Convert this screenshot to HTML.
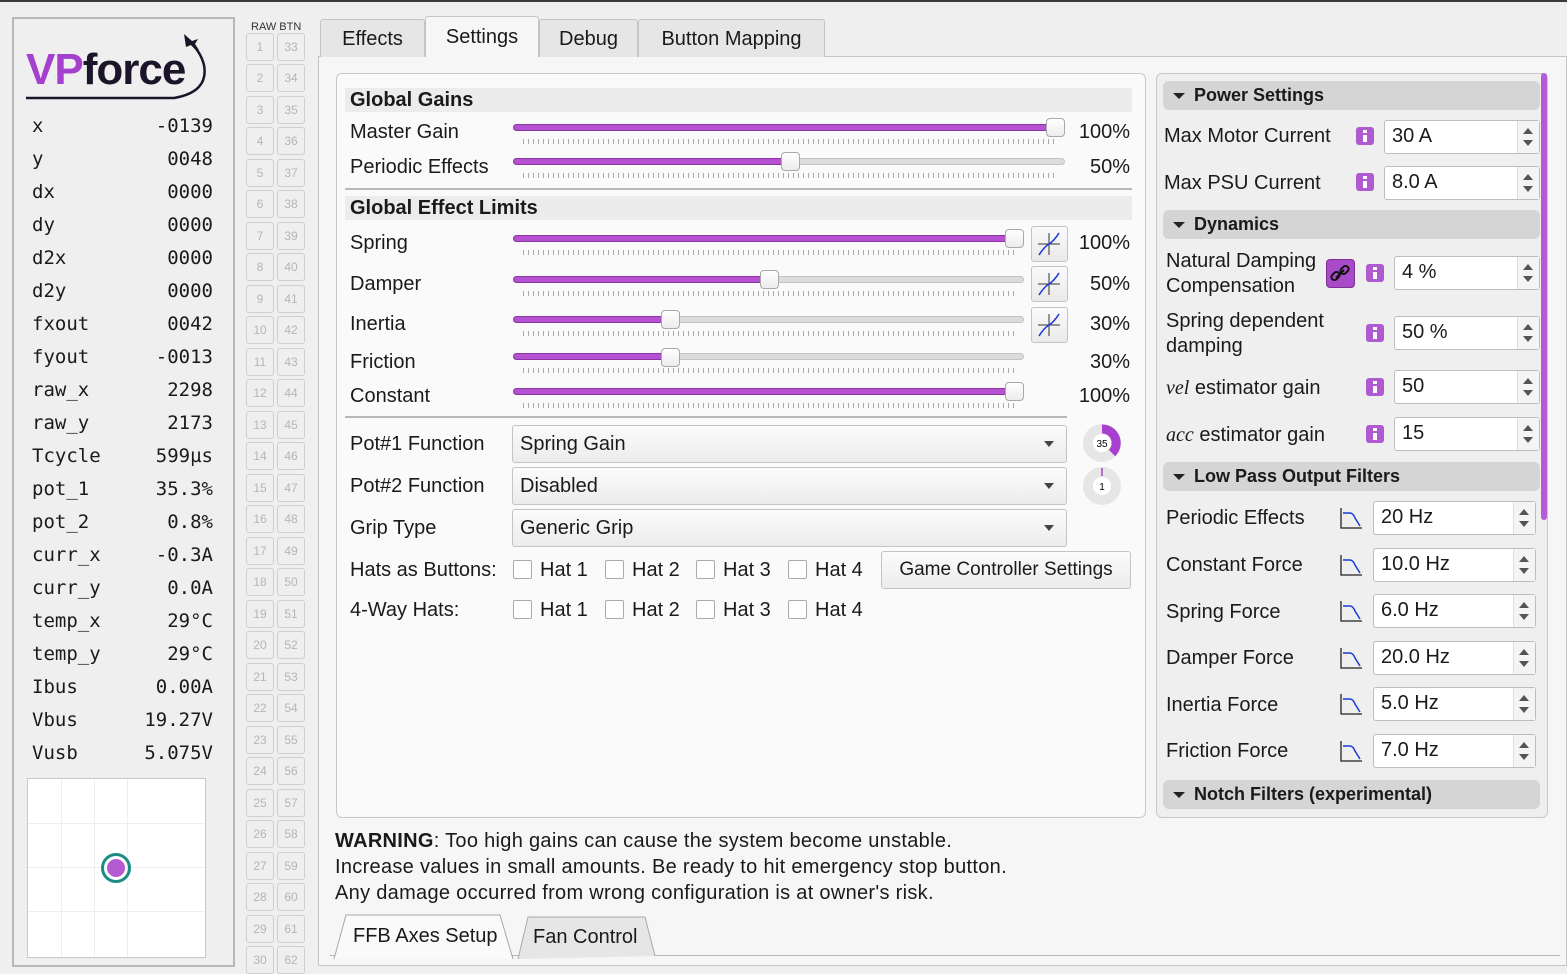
<!DOCTYPE html>
<html><head><meta charset="utf-8"><style>
*{box-sizing:border-box;margin:0;padding:0}
body{width:1567px;height:959px;overflow:hidden;background:#efefef;font-family:"Liberation Sans","DejaVu Sans",sans-serif;color:#1a1a1a;position:relative}
.a{position:absolute}
.t{position:absolute;font-size:20px;white-space:nowrap;line-height:24px}
.m{font-family:"DejaVu Sans Mono","Liberation Mono",monospace;font-size:19px}
.rb{position:absolute;width:28px;height:28px;border:1px solid #cfcfcf;border-radius:3px;background:#efefef;color:#b5b5b5;font-size:12px;text-align:center;line-height:26px}
.tab{position:absolute;top:19px;height:38px;border:1px solid #c4c4c4;border-bottom:none;background:#e6e6e6;font-size:20px;line-height:38px;text-align:center;border-radius:3px 3px 0 0}
.groove{position:absolute;height:7px;border-radius:4px;background:#dcdcdc;border:1px solid #c4c4c4}
.fill{position:absolute;height:7px;border-radius:4px;background:#b651d2;border:1px solid #8c35a5}
.knob{position:absolute;width:19px;height:19px;border:1px solid #a9a9a9;border-radius:4px;background:linear-gradient(#fff,#ececec)}
.tick{position:absolute;height:5px;background:repeating-linear-gradient(90deg,#a9a9a9 0 1px,transparent 1px 5px)}
.hdr{position:absolute;height:24px;background:#ececec;font-weight:bold;font-size:20px;line-height:24px;padding-left:5px}
.cb{position:absolute;width:37px;height:36px;border:1px solid #c4c4c4;border-radius:3px;background:linear-gradient(#fafafa,#eaeaea)}
.combo{position:absolute;height:38px;border:1px solid #c4c4c4;border-radius:3px;background:linear-gradient(#fbfbfb,#ececec);font-size:20px;line-height:36px;padding-left:7px}
.combo:after{content:"";position:absolute;right:12px;top:15px;border:5px solid transparent;border-top:6px solid #444}
.btn{position:absolute;height:38px;border:1px solid #c4c4c4;border-radius:3px;background:linear-gradient(#fbfbfb,#ececec);font-size:19px;line-height:36px;text-align:center;white-space:nowrap}
.chk{position:absolute;width:19px;height:19px;border:1px solid #aaa;border-radius:2px;background:#fff}
.sec{position:absolute;left:1163px;width:377px;height:29px;background:#d5d5d5;border-radius:6px;font-weight:bold;font-size:18px;line-height:29px;padding-left:31px}
.sec:before{content:"";position:absolute;left:10px;top:12px;border:6px solid transparent;border-top:6px solid #222;border-bottom:none}
.spin{position:absolute;height:34px;border:1px solid #bdbdbd;border-radius:3px;background:#fff;font-size:20px;line-height:31px;padding-left:7px}
.spin i{position:absolute;right:0;top:0;width:22px;height:32px;border-left:1px solid #ddd;background:#f4f4f4}
.spin i:before{content:"";position:absolute;left:5px;top:7px;border:5px solid transparent;border-bottom:6px solid #555;border-top:none}
.spin i:after{content:"";position:absolute;left:5px;top:19px;border:5px solid transparent;border-top:6px solid #555;border-bottom:none}
.info{position:absolute;width:18px;height:18px;background:#b05ad2;border-radius:3px}
.info:before{content:"";position:absolute;left:7px;top:3px;width:4px;height:3px;background:#fff}
.info:after{content:"";position:absolute;left:7px;top:8px;width:4px;height:7px;background:#fff}
.lp{position:absolute;width:22px;height:22px}
</style></head><body>
<div class="a" style="left:0;top:0;width:1567px;height:2px;background:#3a3a3a"></div>

<div class="a" style="left:12px;top:17px;width:223px;height:950px;border:2px solid #b8b8b8;background:#efefef"></div>
<div class="t" style="left:26px;top:45px;font-size:44px;line-height:50px;font-weight:900;letter-spacing:-1px"><span style="color:#a53fce">VP</span><span style="color:#1c1529">force</span></div>
<svg class="a" style="left:24px;top:30px" width="185" height="72"><path d="M2 68 L150 68 Q185 62 180 35 Q176 20 165 12" fill="none" stroke="#1c1529" stroke-width="2.5"/><path d="M160 4 l8 7 l6 -2 l-3 5 l4 6 l-4 -1 l-4 -4 l-5 2z" fill="#1c1529"/></svg>
<div class="t m" style="left:32px;top:110px;line-height:33px">x<br>y<br>dx<br>dy<br>d2x<br>d2y<br>fxout<br>fyout<br>raw_x<br>raw_y<br>Tcycle<br>pot_1<br>pot_2<br>curr_x<br>curr_y<br>temp_x<br>temp_y<br>Ibus<br>Vbus<br>Vusb</div>
<div class="t m" style="left:100px;width:113px;top:110px;line-height:33px;text-align:right">-0139<br>0048<br>0000<br>0000<br>0000<br>0000<br>0042<br>-0013<br>2298<br>2173<br>599µs<br>35.3%<br>0.8%<br>-0.3A<br>0.0A<br>29°C<br>29°C<br>0.00A<br>19.27V<br>5.075V</div>
<div class="a" style="left:27px;top:778px;width:179px;height:180px;border:1px solid #c8c8c8;background:#fff;background-image:linear-gradient(90deg,transparent 33px,#eee 33px,#eee 34px,transparent 34px,transparent 66px,#eee 66px,#eee 67px,transparent 67px,transparent 99px,#eee 99px,#eee 100px,transparent 100px),linear-gradient(transparent 44px,#eee 44px,#eee 45px,transparent 45px,transparent 88px,#eee 88px,#eee 89px,transparent 89px,transparent 132px,#eee 132px,#eee 133px,transparent 133px)"></div>
<div class="a" style="left:101px;top:853px;width:30px;height:30px;border:3px solid #1e8c86;border-radius:50%"></div>
<div class="a" style="left:107px;top:859px;width:18px;height:18px;background:#b45ad2;border-radius:50%"></div>

<div class="t" style="left:251px;top:15px;font-size:11px;color:#333">RAW BTN</div>
<div class="rb" style="left:246px;top:33px">1</div><div class="rb" style="left:277px;top:33px">33</div>
<div class="rb" style="left:246px;top:64px">2</div><div class="rb" style="left:277px;top:64px">34</div>
<div class="rb" style="left:246px;top:96px">3</div><div class="rb" style="left:277px;top:96px">35</div>
<div class="rb" style="left:246px;top:127px">4</div><div class="rb" style="left:277px;top:127px">36</div>
<div class="rb" style="left:246px;top:159px">5</div><div class="rb" style="left:277px;top:159px">37</div>
<div class="rb" style="left:246px;top:190px">6</div><div class="rb" style="left:277px;top:190px">38</div>
<div class="rb" style="left:246px;top:222px">7</div><div class="rb" style="left:277px;top:222px">39</div>
<div class="rb" style="left:246px;top:253px">8</div><div class="rb" style="left:277px;top:253px">40</div>
<div class="rb" style="left:246px;top:285px">9</div><div class="rb" style="left:277px;top:285px">41</div>
<div class="rb" style="left:246px;top:316px">10</div><div class="rb" style="left:277px;top:316px">42</div>
<div class="rb" style="left:246px;top:348px">11</div><div class="rb" style="left:277px;top:348px">43</div>
<div class="rb" style="left:246px;top:379px">12</div><div class="rb" style="left:277px;top:379px">44</div>
<div class="rb" style="left:246px;top:411px">13</div><div class="rb" style="left:277px;top:411px">45</div>
<div class="rb" style="left:246px;top:442px">14</div><div class="rb" style="left:277px;top:442px">46</div>
<div class="rb" style="left:246px;top:474px">15</div><div class="rb" style="left:277px;top:474px">47</div>
<div class="rb" style="left:246px;top:505px">16</div><div class="rb" style="left:277px;top:505px">48</div>
<div class="rb" style="left:246px;top:537px">17</div><div class="rb" style="left:277px;top:537px">49</div>
<div class="rb" style="left:246px;top:568px">18</div><div class="rb" style="left:277px;top:568px">50</div>
<div class="rb" style="left:246px;top:600px">19</div><div class="rb" style="left:277px;top:600px">51</div>
<div class="rb" style="left:246px;top:631px">20</div><div class="rb" style="left:277px;top:631px">52</div>
<div class="rb" style="left:246px;top:663px">21</div><div class="rb" style="left:277px;top:663px">53</div>
<div class="rb" style="left:246px;top:694px">22</div><div class="rb" style="left:277px;top:694px">54</div>
<div class="rb" style="left:246px;top:726px">23</div><div class="rb" style="left:277px;top:726px">55</div>
<div class="rb" style="left:246px;top:757px">24</div><div class="rb" style="left:277px;top:757px">56</div>
<div class="rb" style="left:246px;top:789px">25</div><div class="rb" style="left:277px;top:789px">57</div>
<div class="rb" style="left:246px;top:820px">26</div><div class="rb" style="left:277px;top:820px">58</div>
<div class="rb" style="left:246px;top:852px">27</div><div class="rb" style="left:277px;top:852px">59</div>
<div class="rb" style="left:246px;top:883px">28</div><div class="rb" style="left:277px;top:883px">60</div>
<div class="rb" style="left:246px;top:915px">29</div><div class="rb" style="left:277px;top:915px">61</div>
<div class="rb" style="left:246px;top:946px">30</div><div class="rb" style="left:277px;top:946px">62</div>

<div class="a" style="left:318px;top:56px;width:1249px;height:910px;border:1px solid #c4c4c4;background:#f6f6f6"></div>
<div class="tab" style="left:320px;width:105px">Effects</div>
<div class="tab" style="left:425px;width:114px;top:16px;height:41px;background:#f6f6f6;line-height:40px">Settings</div>
<div class="tab" style="left:539px;width:99px">Debug</div>
<div class="tab" style="left:638px;width:187px">Button Mapping</div>

<div class="a" style="left:336px;top:73px;width:810px;height:745px;border:1px solid #c8c8c8;border-radius:6px;background:#fafafa"></div>
<div class="hdr" style="left:345px;top:88px;width:787px">Global Gains</div>
<div class="t" style="left:350px;top:120px">Master Gain</div>
<div class="t" style="left:350px;top:155px">Periodic Effects</div>
<div class="a" style="left:345px;top:188px;width:787px;height:2px;background:#b8b8b8"></div>
<div class="hdr" style="left:345px;top:196px;width:787px">Global Effect Limits</div>
<div class="t" style="left:350px;top:231px">Spring</div>
<div class="t" style="left:350px;top:272px">Damper</div>
<div class="t" style="left:350px;top:312px">Inertia</div>
<div class="t" style="left:350px;top:350px">Friction</div>
<div class="t" style="left:350px;top:384px">Constant</div>

<div class="groove" style="left:513px;top:124px;width:552px"></div><div class="fill" style="left:513px;top:124px;width:545px"></div><div class="tick" style="left:523px;top:139px;width:535px"></div><div class="knob" style="left:1046px;top:118px"></div>
<div class="groove" style="left:513px;top:158px;width:552px"></div><div class="fill" style="left:513px;top:158px;width:280px"></div><div class="tick" style="left:523px;top:173px;width:535px"></div><div class="knob" style="left:781px;top:152px"></div>
<div class="groove" style="left:513px;top:235px;width:511px"></div><div class="fill" style="left:513px;top:235px;width:505px"></div><div class="tick" style="left:523px;top:250px;width:495px"></div><div class="knob" style="left:1005px;top:229px"></div>
<div class="groove" style="left:513px;top:276px;width:511px"></div><div class="fill" style="left:513px;top:276px;width:258px"></div><div class="tick" style="left:523px;top:291px;width:495px"></div><div class="knob" style="left:760px;top:270px"></div>
<div class="groove" style="left:513px;top:316px;width:511px"></div><div class="fill" style="left:513px;top:316px;width:160px"></div><div class="tick" style="left:523px;top:331px;width:495px"></div><div class="knob" style="left:661px;top:310px"></div>
<div class="groove" style="left:513px;top:353px;width:511px"></div><div class="fill" style="left:513px;top:353px;width:160px"></div><div class="tick" style="left:523px;top:368px;width:495px"></div><div class="knob" style="left:661px;top:348px"></div>
<div class="groove" style="left:513px;top:388px;width:511px"></div><div class="fill" style="left:513px;top:388px;width:505px"></div><div class="tick" style="left:523px;top:403px;width:495px"></div><div class="knob" style="left:1005px;top:382px"></div>

<div class="cb" style="left:1031px;top:226px"><svg width="35" height="34"><path d="M17 6 V28 M6 17 H28" stroke="#333" stroke-width="1"/><path d="M7 28 Q12 20 17 17 Q22 14 27 6" stroke="#1c3ad8" stroke-width="1.6" fill="none"/></svg></div>
<div class="cb" style="left:1031px;top:266px"><svg width="35" height="34"><path d="M17 6 V28 M6 17 H28" stroke="#333" stroke-width="1"/><path d="M7 28 Q12 20 17 17 Q22 14 27 6" stroke="#1c3ad8" stroke-width="1.6" fill="none"/></svg></div>
<div class="cb" style="left:1031px;top:307px"><svg width="35" height="34"><path d="M17 6 V28 M6 17 H28" stroke="#333" stroke-width="1"/><path d="M7 28 Q12 20 17 17 Q22 14 27 6" stroke="#1c3ad8" stroke-width="1.6" fill="none"/></svg></div>

<div class="t" style="left:1070px;width:60px;text-align:right;top:120px">100%</div>
<div class="t" style="left:1070px;width:60px;text-align:right;top:155px">50%</div>
<div class="t" style="left:1070px;width:60px;text-align:right;top:231px">100%</div>
<div class="t" style="left:1070px;width:60px;text-align:right;top:272px">50%</div>
<div class="t" style="left:1070px;width:60px;text-align:right;top:312px">30%</div>
<div class="t" style="left:1070px;width:60px;text-align:right;top:350px">30%</div>
<div class="t" style="left:1070px;width:60px;text-align:right;top:384px">100%</div>
<div class="a" style="left:345px;top:416px;width:722px;height:2px;background:#b8b8b8"></div>

<div class="t" style="left:350px;top:432px">Pot#1 Function</div>
<div class="t" style="left:350px;top:474px">Pot#2 Function</div>
<div class="t" style="left:350px;top:516px">Grip Type</div>
<div class="combo" style="left:512px;top:425px;width:555px">Spring Gain</div>
<div class="combo" style="left:512px;top:467px;width:555px">Disabled</div>
<div class="combo" style="left:512px;top:509px;width:555px">Generic Grip</div>
<svg class="a" style="left:1082px;top:423px" width="40" height="40"><circle cx="20" cy="20" r="14" fill="none" stroke="#e6e6e6" stroke-width="10"/><path d="M20 6 A14 14 0 0 1 30 30" fill="none" stroke="#a93fce" stroke-width="9"/><circle cx="20" cy="20" r="9" fill="#fff"/><text x="20" y="24" font-size="10" text-anchor="middle" font-family="Liberation Sans">35</text></svg>
<svg class="a" style="left:1082px;top:466px" width="40" height="40"><circle cx="20" cy="20" r="14" fill="none" stroke="#e6e6e6" stroke-width="10"/><path d="M20 2 V10" stroke="#a93fce" stroke-width="1.5"/><circle cx="20" cy="20" r="9" fill="#fff"/><text x="20" y="24" font-size="10" text-anchor="middle" font-family="Liberation Sans">1</text></svg>

<div class="t" style="left:350px;top:558px">Hats as Buttons:</div>
<div class="t" style="left:350px;top:598px">4-Way Hats:</div>
<div class="chk" style="left:513px;top:560px"></div><div class="t" style="left:540px;top:558px">Hat 1</div>
<div class="chk" style="left:605px;top:560px"></div><div class="t" style="left:632px;top:558px">Hat 2</div>
<div class="chk" style="left:696px;top:560px"></div><div class="t" style="left:723px;top:558px">Hat 3</div>
<div class="chk" style="left:788px;top:560px"></div><div class="t" style="left:815px;top:558px">Hat 4</div>
<div class="chk" style="left:513px;top:600px"></div><div class="t" style="left:540px;top:598px">Hat 1</div>
<div class="chk" style="left:605px;top:600px"></div><div class="t" style="left:632px;top:598px">Hat 2</div>
<div class="chk" style="left:696px;top:600px"></div><div class="t" style="left:723px;top:598px">Hat 3</div>
<div class="chk" style="left:788px;top:600px"></div><div class="t" style="left:815px;top:598px">Hat 4</div>
<div class="btn" style="left:881px;top:551px;width:250px">Game Controller Settings</div>

<div class="t" style="left:335px;top:828px;line-height:26px;letter-spacing:0.3px"><b>WARNING</b>: Too high gains can cause the system become unstable.<br>Increase values in small amounts. Be ready to hit emergency stop button.<br>Any damage occurred from wrong configuration is at owner's risk.</div>

<div class="a" style="left:330px;top:955px;width:1230px;height:1px;background:#b8b8b8"></div>
<svg class="a" style="left:330px;top:912px" width="340" height="47"><path d="M4 47 L16 3 L170 3 L183 47" fill="#fafafa" stroke="#a8a8a8"/><path d="M188 47 L198 5 L315 5 L325 44" fill="#e6e6e6" stroke="#a8a8a8"/></svg>
<div class="t" style="left:353px;top:924px">FFB Axes Setup</div>
<div class="t" style="left:533px;top:925px">Fan Control</div>

<div class="a" style="left:1156px;top:73px;width:392px;height:745px;border:1px solid #c8c8c8;border-radius:6px;background:#efefef"></div>
<div class="a" style="left:1541px;top:73px;width:6px;height:447px;background:#b45ad2;border-radius:3px"></div>
<div class="sec" style="top:81px">Power Settings</div>
<div class="t" style="left:1164px;top:124px">Max Motor Current</div>
<div class="info" style="left:1356px;top:127px"></div>
<div class="spin" style="left:1384px;top:120px;width:156px">30 A<i></i></div>
<div class="t" style="left:1164px;top:171px">Max PSU Current</div>
<div class="info" style="left:1356px;top:173px"></div>
<div class="spin" style="left:1384px;top:166px;width:156px">8.0 A<i></i></div>

<div class="sec" style="top:210px">Dynamics</div>
<div class="t" style="left:1166px;top:249px;line-height:25px">Natural Damping<br>Compensation</div>
<div class="a" style="left:1326px;top:259px;width:29px;height:29px;background:#a94bc9;border:1px solid #7a3094;border-radius:4px"><svg width="27" height="27"><path d="M9 18 L17 10" stroke="#111" stroke-width="2"/><rect x="4" y="13" width="9" height="6" rx="3" transform="rotate(-45 8.5 16)" fill="none" stroke="#111" stroke-width="2"/><rect x="13" y="7" width="9" height="6" rx="3" transform="rotate(-45 17.5 10)" fill="none" stroke="#111" stroke-width="2"/></svg></div>
<div class="info" style="left:1366px;top:264px"></div>
<div class="spin" style="left:1394px;top:256px;width:146px">4 %<i></i></div>
<div class="t" style="left:1166px;top:309px;line-height:25px">Spring dependent<br>damping</div>
<div class="info" style="left:1366px;top:324px"></div>
<div class="spin" style="left:1394px;top:316px;width:146px">50 %<i></i></div>
<div class="t" style="left:1166px;top:376px"><i style="font-family:'Liberation Serif',serif">vel</i> estimator gain</div>
<div class="info" style="left:1366px;top:378px"></div>
<div class="spin" style="left:1394px;top:370px;width:146px">50<i></i></div>
<div class="t" style="left:1166px;top:423px"><i style="font-family:'Liberation Serif',serif">acc</i> estimator gain</div>
<div class="info" style="left:1366px;top:425px"></div>
<div class="spin" style="left:1394px;top:417px;width:146px">15<i></i></div>

<div class="sec" style="top:462px">Low Pass Output Filters</div>
<svg width="0" height="0" style="position:absolute"><defs><g id="lp"><path d="M1 1 V21 H22" stroke="#222" stroke-width="1.3" fill="none"/><path d="M3 6 H10 Q13 6 15 11 L20 19" stroke="#1c3ad8" stroke-width="1.5" fill="none"/></g></defs></svg>
<div class="t" style="left:1166px;top:506px">Periodic Effects</div><svg class="lp" style="left:1340px;top:507px"><use href="#lp"/></svg><div class="spin" style="left:1373px;top:501px;width:163px">20 Hz<i></i></div>
<div class="t" style="left:1166px;top:553px">Constant Force</div><svg class="lp" style="left:1340px;top:554px"><use href="#lp"/></svg><div class="spin" style="left:1373px;top:548px;width:163px">10.0 Hz<i></i></div>
<div class="t" style="left:1166px;top:600px">Spring Force</div><svg class="lp" style="left:1340px;top:600px"><use href="#lp"/></svg><div class="spin" style="left:1373px;top:594px;width:163px">6.0 Hz<i></i></div>
<div class="t" style="left:1166px;top:646px">Damper Force</div><svg class="lp" style="left:1340px;top:647px"><use href="#lp"/></svg><div class="spin" style="left:1373px;top:641px;width:163px">20.0 Hz<i></i></div>
<div class="t" style="left:1166px;top:693px">Inertia Force</div><svg class="lp" style="left:1340px;top:693px"><use href="#lp"/></svg><div class="spin" style="left:1373px;top:687px;width:163px">5.0 Hz<i></i></div>
<div class="t" style="left:1166px;top:739px">Friction Force</div><svg class="lp" style="left:1340px;top:740px"><use href="#lp"/></svg><div class="spin" style="left:1373px;top:734px;width:163px">7.0 Hz<i></i></div>
<div class="sec" style="top:780px">Notch Filters (experimental)</div>
</body></html>
